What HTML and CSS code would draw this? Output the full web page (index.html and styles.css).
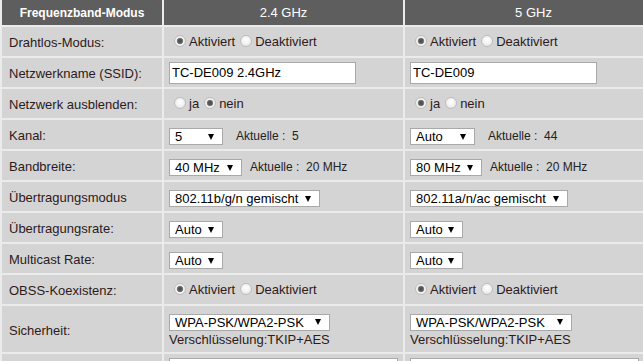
FILE: index.html
```html
<!DOCTYPE html>
<html lang="de">
<head>
<meta charset="utf-8">
<title>WLAN</title>
<link rel="stylesheet" href="styles.css">
</head>
<body>
<table class="grid">
  <colgroup><col class="c1"><col class="c2"><col class="c3"></colgroup>
  <tr class="head"><th>Frequenzband-Modus</th><th>2.4 GHz</th><th>5 GHz</th></tr>
  <tr>
    <td class="lbl">Drahtlos-Modus:</td>
    <td><label><input type="radio" name="m24" checked>Aktiviert</label><label><input type="radio" name="m24">Deaktiviert</label></td>
    <td><label><input type="radio" name="m5" checked>Aktiviert</label><label><input type="radio" name="m5">Deaktiviert</label></td>
  </tr>
  <tr>
    <td class="lbl">Netzwerkname (SSID):</td>
    <td><input class="txt" type="text" value="TC-DE009 2.4GHz"></td>
    <td><input class="txt" type="text" value="TC-DE009"></td>
  </tr>
  <tr>
    <td class="lbl">Netzwerk ausblenden:</td>
    <td><label><input type="radio" name="h24">ja</label><label><input type="radio" name="h24" checked>nein</label></td>
    <td><label><input type="radio" name="h5" checked>ja</label><label><input type="radio" name="h5">nein</label></td>
  </tr>
  <tr>
    <td class="lbl">Kanal:</td>
    <td><select class="sel w54"><option>5</option></select><span class="cur cur-k">Aktuelle :&nbsp; 5</span></td>
    <td><select class="sel w65"><option>Auto</option></select><span class="cur cur-k">Aktuelle :&nbsp; 44</span></td>
  </tr>
  <tr>
    <td class="lbl">Bandbreite:</td>
    <td><select class="sel w73"><option>40 MHz</option></select><span class="cur">Aktuelle :&nbsp; 20 MHz</span></td>
    <td><select class="sel w72"><option>80 MHz</option></select><span class="cur">Aktuelle :&nbsp; 20 MHz</span></td>
  </tr>
  <tr>
    <td class="lbl">Übertragungsmodus</td>
    <td><select class="sel w151"><option>802.11b/g/n gemischt</option></select></td>
    <td><select class="sel w158"><option>802.11a/n/ac gemischt</option></select></td>
  </tr>
  <tr>
    <td class="lbl">Übertragungsrate:</td>
    <td><select class="sel w54"><option>Auto</option></select></td>
    <td><select class="sel w53"><option>Auto</option></select></td>
  </tr>
  <tr>
    <td class="lbl">Multicast Rate:</td>
    <td><select class="sel w54"><option>Auto</option></select></td>
    <td><select class="sel w53"><option>Auto</option></select></td>
  </tr>
  <tr>
    <td class="lbl">OBSS-Koexistenz:</td>
    <td><label><input type="radio" name="o24" checked>Aktiviert</label><label><input type="radio" name="o24">Deaktiviert</label></td>
    <td><label><input type="radio" name="o5" checked>Aktiviert</label><label><input type="radio" name="o5">Deaktiviert</label></td>
  </tr>
  <tr class="tall">
    <td class="lbl">Sicherheit:</td>
    <td><select class="sel w161"><option>WPA-PSK/WPA2-PSK</option></select><div class="enc">Verschlüsselung:TKIP+AES</div></td>
    <td><select class="sel w162"><option>WPA-PSK/WPA2-PSK</option></select><div class="enc">Verschlüsselung:TKIP+AES</div></td>
  </tr>
  <tr class="last">
    <td class="lbl"></td>
    <td><input class="txt key" type="password" value="xxxxxxxxxxxx"></td>
    <td><input class="txt key" type="password" value="xxxxxxxxxxxx"></td>
  </tr>
</table>
</body>
</html>
```
FILE: styles.css
```css
html, body {
  margin: 0;
  padding: 0;
  background: #ebebeb;
  overflow: hidden;
}
body {
  font-family: "Liberation Sans", Arial, sans-serif;
  font-size: 13px;
  color: #2e1a1a;
}
.grid {
  border-collapse: separate;
  border-spacing: 2px;
  margin-top: -2px;
  width: 660px;
  table-layout: fixed;
}
.c1 { width: 160px; }
.c2 { width: 239px; }
.c3 { width: 257px; }
.grid th {
  background: #5e5e5e;
  color: #ffffff;
  height: 25px;
  padding: 0;
  font-size: 13px;
  font-weight: normal;
  text-align: center;
  vertical-align: middle;
}
.grid th:first-child {
  font-weight: bold;
  font-size: 12px;
}
.grid td {
  box-sizing: border-box;
  background: #d4d4d4;
  height: 29px;
  padding: 0 0 0 5px;
  vertical-align: middle;
  white-space: nowrap;
}
.grid td.lbl {
  padding: 2px 0 0 7px;
}
.grid tr.tall td { height: 46px; }
.grid tr.last td { height: 29px; vertical-align: top; padding-top: 4px; }
label { display: inline; }
input[type="radio"] {
  -webkit-appearance: none;
  appearance: none;
  width: 12px;
  height: 12px;
  margin: 0 3px 0 5px;
  border-radius: 50%;
  border: 1px solid #bdbdbd;
  background: radial-gradient(circle at 50% 40%, #ffffff 0%, #f2f2f2 50%, #dcdcdc 100%);
  vertical-align: -1px;
}
input[type="radio"]:checked {
  background: radial-gradient(circle, #4a4a4a 0, #5a5a5a 2px, #8a8a8a 3px, #f4f4f4 3.6px, #f0f0f0 4.5px, #dadada 100%);
}
.txt {
  box-sizing: border-box;
  width: 187px;
  height: 22px;
  border: 1px solid #a9a9a9;
  background: #fff;
  font-family: "Liberation Sans", Arial, sans-serif;
  font-size: 13px;
  color: #000;
  padding: 0 2px;
  margin: 0;
  outline: none;
}
.txt.key { width: 229px; }
.sel {
  -webkit-appearance: none;
  appearance: none;
  box-sizing: border-box;
  height: 17px;
  border: 1px solid #a9a9a9;
  border-radius: 0;
  background: #fff url("data:image/svg+xml,%3Csvg xmlns='http://www.w3.org/2000/svg' width='6' height='6'%3E%3Cpath d='M0 0H6L3 6Z' fill='%23000'/%3E%3C/svg%3E") no-repeat right 8px center;
  font-family: "Liberation Sans", Arial, sans-serif;
  font-size: 13px;
  color: #000;
  padding: 0 0 0 5px;
  margin: 4px 0 0 0;
  line-height: 15px;
  vertical-align: middle;
}
.tall .sel { margin-top: 2px; }
.w53 { width: 53px; }
.w54 { width: 54px; }
.w65 { width: 65px; }
.w72 { width: 72px; }
.w73 { width: 73px; }
.w151 { width: 151px; }
.w158 { width: 158px; }
.w161 { width: 161px; }
.w162 { width: 162px; }
.cur {
  font-size: 12px;
  color: #222;
  margin-left: 8px;
  vertical-align: middle;
  position: relative;
  top: 1px;
}
.cur-k { margin-left: 13px; }
.enc {
  margin-top: 1px;
  line-height: 15px;
}
```
